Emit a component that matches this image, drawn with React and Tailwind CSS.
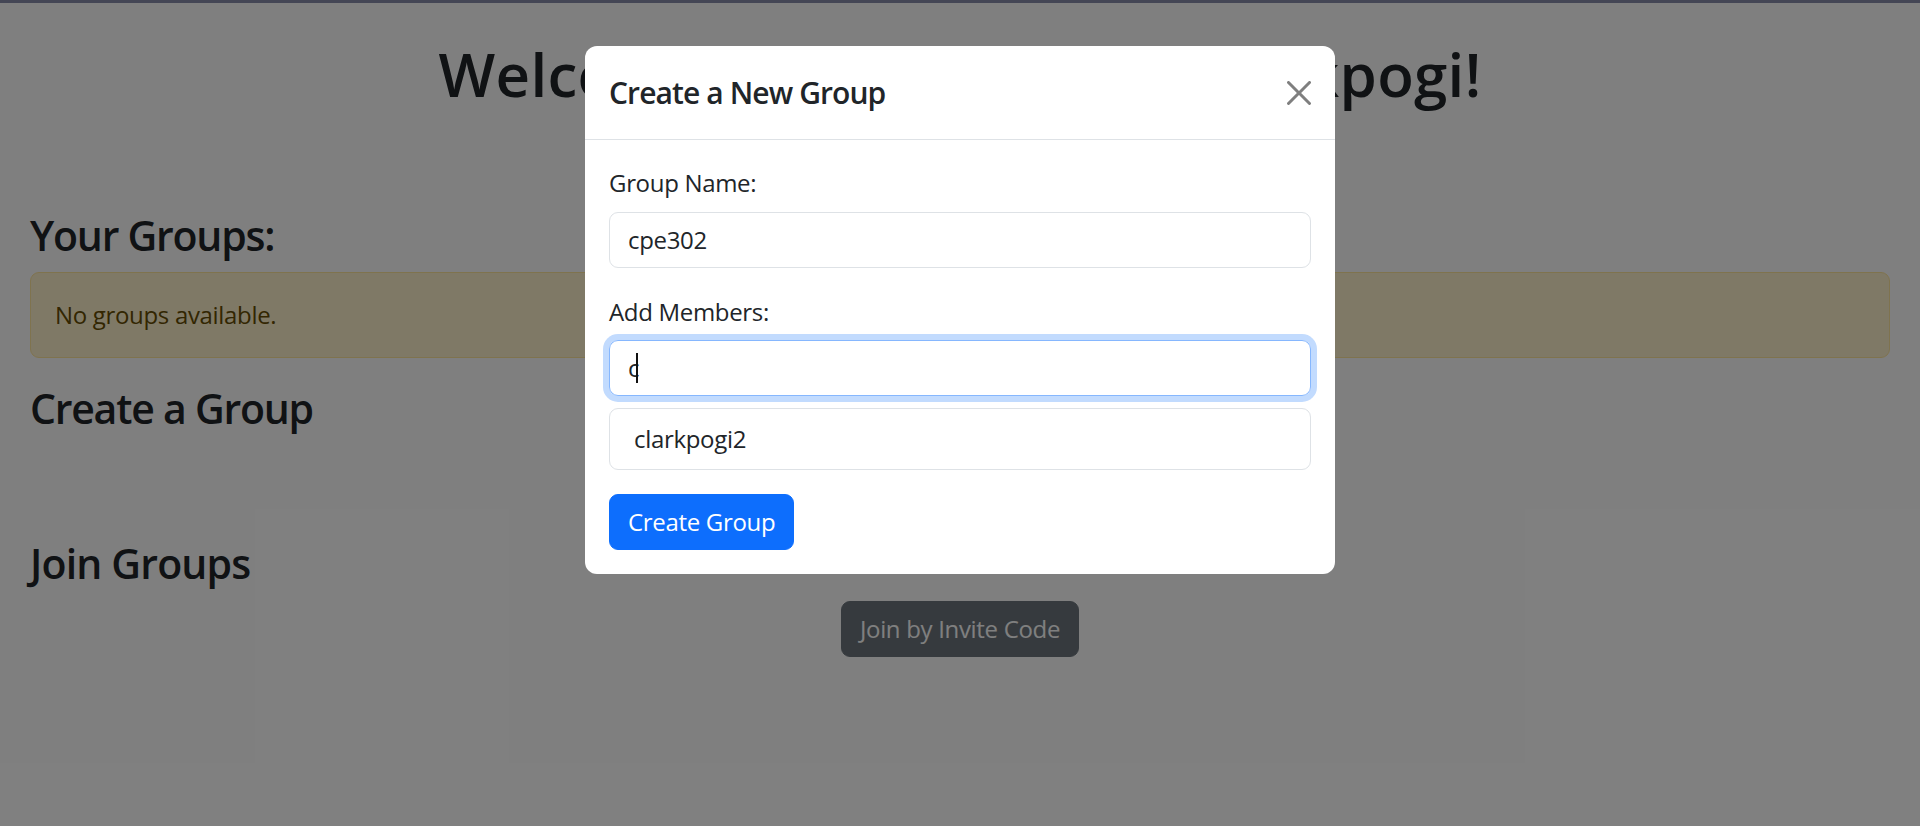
import React from "react";

function CloseIcon() {
  return (
    <svg width="24" height="24" viewBox="0 0 16 16" className="block">
      <path
        fill="#000"
        fillOpacity="0.5"
        d="M.293.293a1 1 0 0 1 1.414 0L8 6.586 14.293.293a1 1 0 1 1 1.414 1.414L9.414 8l6.293 6.293a1 1 0 0 1-1.414 1.414L8 9.414l-6.293 6.293a1 1 0 0 1-1.414-1.414L6.586 8 .293 1.707a1 1 0 0 1 0-1.414z"
      />
    </svg>
  );
}

export default function App() {
  return (
    <div className="relative h-[826px] w-full overflow-hidden bg-white font-['Open_Sans',sans-serif] text-[#212529] tracking-[-0.02em]">
      {/* Page behind the modal */}
      <div className="flex flex-col px-[30px] pt-[38px]">
        <h1 className="m-0 text-center text-[60px] font-semibold leading-[72px] tracking-[0.005em]">
          Welcome to Group Chats, clarkpogi!
        </h1>
        <h3 className="mt-[100px] mb-[12px] text-[41px] font-semibold leading-[50px] tracking-[-0.03em]">Your Groups:</h3>
        <div className="mb-[25px] rounded-[9px] border border-[#ffe69c] bg-[#fff3cd] px-[24px] py-[24px] text-[24px] leading-[36px] text-[#664d03]">
          No groups available.
        </div>
        <h3 className="mb-[12px] text-[41px] font-semibold leading-[50px] tracking-[-0.03em]">Create a Group</h3>
        <div className="h-[93px]" />
        <h3 className="mb-[12px] text-[41px] font-semibold leading-[50px] tracking-[-0.02em]">Join Groups</h3>
        <div className="mt-[1px] flex justify-center">
          <button className="rounded-[9px] border border-[#6c757d] bg-[#6c757d] px-[18px] py-[9px] text-[24px] leading-[36px] text-white">
            Join by Invite Code
          </button>
        </div>
      </div>

      {/* Backdrop + modal */}
      <div className="absolute inset-0 flex flex-col bg-black/50">
        <div className="h-[3px] w-full bg-[#444655]" />
        <div className="flex justify-center pt-[43px]">
          <div className="w-[750px] rounded-[12px] bg-white">
            <div className="flex items-center justify-between border-b border-[#dee2e6] px-[24px] py-[24px]">
              <h5 className="text-[30px] font-semibold leading-[45px] tracking-[-0.03em]">Create a New Group</h5>
              <CloseIcon />
            </div>
            <div className="flex flex-col p-[24px]">
              <label className="mb-[11px] pt-[1px] text-[24px] leading-[36px]">Group Name:</label>
              <div className="mb-[24px] rounded-[9px] border border-[#dee2e6] px-[18px] py-[9px] text-[24px] leading-[36px]">
                cpe302
              </div>
              <label className="mb-[10px] pt-[2px] text-[24px] leading-[36px]">Add Members:</label>
              <div className="flex items-center rounded-[9px] border border-[#86b7fe] px-[18px] py-[9px] text-[24px] leading-[36px] shadow-[0_0_0_6px_rgba(13,110,253,0.25)]">
                <span>c</span>
                <span className="ml-[-3px] inline-block h-[30px] w-[2px] bg-[#111]" />
              </div>
              <div className="mt-[12px] mb-[24px] rounded-[9px] border border-[#dee2e6] px-[24px] py-[12px] text-[24px] leading-[36px]">
                clarkpogi2
              </div>
              <div>
                <button className="rounded-[9px] border border-[#0d6efd] bg-[#0d6efd] px-[18px] py-[9px] text-[24px] leading-[36px] text-white">
                  Create Group
                </button>
              </div>
            </div>
          </div>
        </div>
      </div>
    </div>
  );
}
